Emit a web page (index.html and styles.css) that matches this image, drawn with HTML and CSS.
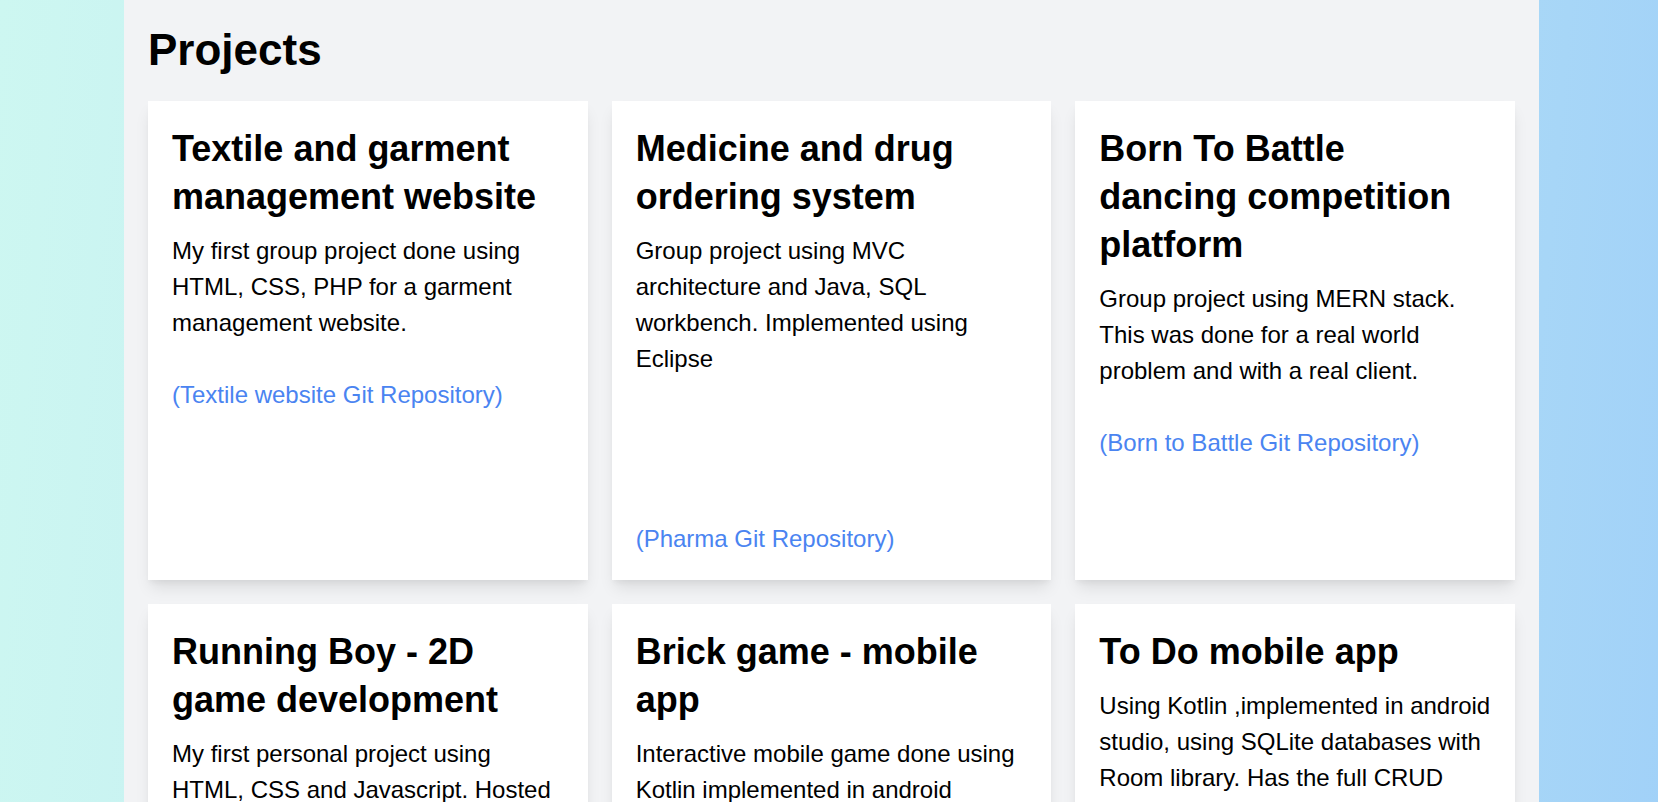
FILE: index.html
```html
<!DOCTYPE html>
<html lang="en">
<head>
<meta charset="utf-8">
<title>Projects</title>
<link rel="stylesheet" href="styles.css">
</head>
<body>
<main class="panel">
  <h1 class="page-title">Projects</h1>
  <section class="grid">
    <article class="card">
      <h2 class="card-title">Textile and garment management website</h2>
      <p class="card-text">My first group project done using HTML, CSS, PHP for a garment management website.<br><br><a class="repo" href="#">(Textile website Git Repository)</a></p>
    </article>
    <article class="card">
      <h2 class="card-title">Medicine and drug ordering system</h2>
      <p class="card-text">Group project using MVC architecture and Java, SQL workbench. Implemented using Eclipse<br><br><br><br><br><a class="repo" href="#">(Pharma Git Repository)</a></p>
    </article>
    <article class="card">
      <h2 class="card-title">Born To Battle dancing competition platform</h2>
      <p class="card-text">Group project using MERN stack. This was done for a real world problem and with a real client.<br><br><a class="repo" href="#">(Born to Battle Git Repository)</a></p>
    </article>
    <article class="card">
      <h2 class="card-title">Running Boy - 2D game development</h2>
      <p class="card-text">My first personal project using HTML, CSS and Javascript. Hosted using GitHub pages.<br><br><a class="repo" href="#">(Running Boy Git Repository)</a></p>
    </article>
    <article class="card">
      <h2 class="card-title">Brick game - mobile app</h2>
      <p class="card-text">Interactive mobile game done using Kotlin implemented in android studio.<br><br><a class="repo" href="#">(Brick game Git Repository)</a></p>
    </article>
    <article class="card">
      <h2 class="card-title">To Do mobile app</h2>
      <p class="card-text">Using Kotlin ,implemented in android studio, using SQLite databases with Room library. Has the full CRUD functionality.<br><br><a class="repo" href="#">(To Do app Git Repository)</a></p>
    </article>
  </section>
</main>
</body>
</html>
```
FILE: styles.css
```css
html, body {
  margin: 0;
  padding: 0;
}

body {
  min-height: 100vh;
  background: linear-gradient(95deg, #cdf7f1 0%, #c4eef3 30%, #b3e0f5 70%, #a1d1f8 100%);
  font-family: "Liberation Sans", Arial, Helvetica, sans-serif;
  color: #000;
}

.panel {
  box-sizing: border-box;
  width: 1415px;
  margin: 0 119px 0 124px;
  padding: 24px 24px 40px;
  background: #f2f3f5;
}

.page-title {
  margin: 0 0 26px;
  font-size: 44px;
  line-height: 51px;
  font-weight: 700;
}

.grid {
  display: grid;
  grid-template-columns: repeat(3, 1fr);
  gap: 24px;
}

.card {
  background: #fff;
  padding: 24px 24px 23px;
  box-shadow: 0 10px 15px -3px rgba(0, 0, 0, 0.1), 0 4px 6px -2px rgba(0, 0, 0, 0.05);
}

.card-title {
  margin: 0 0 12px;
  font-size: 36px;
  line-height: 48px;
  font-weight: 700;
}

.card-text {
  margin: 0;
  font-size: 24px;
  line-height: 36px;
}

.repo {
  color: #4a84f1;
  text-decoration: none;
}
```
